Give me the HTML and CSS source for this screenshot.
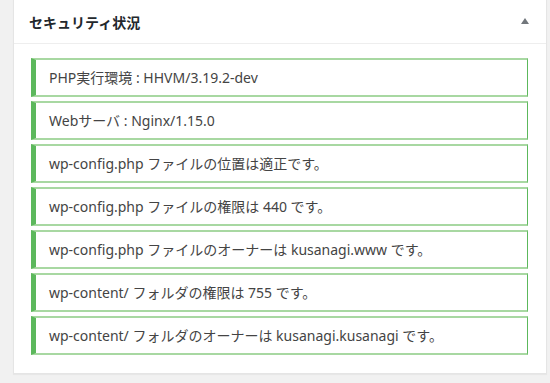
FILE: index.html
```html
<!DOCTYPE html>
<html lang="ja">
<head>
  <meta charset="UTF-8" />
  <title>セキュリティ状況</title>
  <link rel="stylesheet" href="styles.css">
</head>
<body>

  <div class="postbox">
    <div class="postbox-header">
      <h2>セキュリティ状況</h2>
      <span class="toggle-arrow"></span>
    </div>
    <div class="inside">
      <div class="notice"><p>PHP実行環境 : HHVM/3.19.2-dev</p></div>
      <div class="notice"><p>Webサーバ : Nginx/1.15.0</p></div>
      <div class="notice"><p>wp-config.php ファイルの位置は適正です。</p></div>
      <div class="notice"><p>wp-config.php ファイルの権限は 440 です。</p></div>
      <div class="notice"><p>wp-config.php ファイルのオーナーは kusanagi.www です。</p></div>
      <div class="notice"><p>wp-content/ フォルダの権限は 755 です。</p></div>
      <div class="notice"><p>wp-content/ フォルダのオーナーは kusanagi.kusanagi です。</p></div>
    </div>
  </div>

</body>
</html>
```

FILE: styles.css
```css
body {
  margin: 0;
  background-color: #f1f1f1;
  font-family: "Segoe UI", "Noto Sans", "Noto Sans CJK JP", sans-serif;
  color: #444;
  padding: 0 3px 10px 13px;
}

.postbox {
  margin-top: -1px;
  background-color: #fff;
  border: 1px solid #e5e5e5;
  box-shadow: 0 1px 1px rgba(0, 0, 0, 0.04);
}

.postbox-header {
  display: flex;
  align-items: center;
  justify-content: space-between;
  height: 43px;
  padding: 0 17px 0 15px;
  border-bottom: 1px solid #eee;
}

.postbox-header h2 {
  margin: 0;
  font-size: 14px;
  font-weight: bold;
  color: #23282d;
  font-family: "Noto Sans CJK JP", sans-serif;
}

.toggle-arrow {
  width: 0;
  height: 0;
  border-left: 4px solid transparent;
  border-right: 4px solid transparent;
  border-bottom: 6px solid #72777c;
  margin-top: -2px;
}

.inside {
  display: flex;
  flex-direction: column;
  gap: 4px;
  padding: 14px 18px 18px 17px;
}

.notice {
  border-top: 2px solid #a8d8a2;
  border-bottom: 2px solid #a8d8a2;
  border-right: 1px solid #5cb85c;
  border-left: 5px solid #5cb85c;
  padding: 8px 13px;
}

.notice p {
  margin: 0;
  font-size: 14px;
  line-height: 19px;
}
```
